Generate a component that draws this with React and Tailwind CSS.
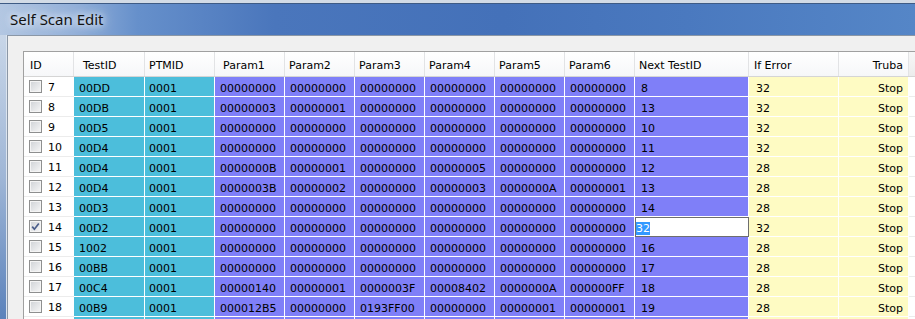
import React from "react";

const CYAN = "bg-[#4cbedb]";
const PURPLE = "bg-[#7f7ff8]";
const YELLOW = "bg-[#fefbc3]";

const Z = "00000000";
const zeros6 = [Z, Z, Z, Z, Z, Z];
const blank6 = ["", "", "", "", "", ""];

const rows = [
  { id: 7, t: "00DD", p: "0001", params: zeros6, next: "8", err: "32" },
  { id: 8, t: "00DB", p: "0001", params: ["00000003", "00000001", Z, Z, Z, Z], next: "13", err: "32" },
  { id: 9, t: "00D5", p: "0001", params: zeros6, next: "10", err: "32" },
  { id: 10, t: "00D4", p: "0001", params: zeros6, next: "11", err: "32" },
  { id: 11, t: "00D4", p: "0001", params: ["0000000B", "00000001", Z, "00000005", Z, Z], next: "12", err: "28" },
  { id: 12, t: "00D4", p: "0001", params: ["0000003B", "00000002", Z, "00000003", "0000000A", "00000001"], next: "13", err: "28" },
  { id: 13, t: "00D3", p: "0001", params: zeros6, next: "14", err: "28" },
  { id: 14, t: "00D2", p: "0001", params: zeros6, next: "32", err: "32", checked: true, editing: true },
  { id: 15, t: "1002", p: "0001", params: zeros6, next: "16", err: "28" },
  { id: 16, t: "00BB", p: "0001", params: zeros6, next: "17", err: "28" },
  { id: 17, t: "00C4", p: "0001", params: ["00000140", "00000001", "0000003F", "00008402", "0000000A", "000000FF"], next: "18", err: "28" },
  { id: 18, t: "00B9", p: "0001", params: ["000012B5", Z, "0193FF00", Z, "00000001", "00000001"], next: "19", err: "28" },
  { id: 19, t: "", p: "", params: blank6, next: "", err: "", stop: "", partial: true },
];

function CheckBox({ checked }) {
  return (
    <span className="relative block w-[13px] h-[13px] shrink-0 border border-[#8e8f8f] bg-gradient-to-br from-[#cfd2d6] to-[#f7f7f7] shadow-[inset_0_0_0_1px_#f4f4f4]">
      {checked && (
        <svg className="absolute left-[0px] top-[0px]" width="11" height="11" viewBox="0 0 11 11">
          <path d="M2.2 5.6 L4.4 8.2 L8.8 2.4" fill="none" stroke="#4a5d8a" strokeWidth="1.7" />
        </svg>
      )}
    </span>
  );
}

function HeadCell({ w, pad, right, children }) {
  return (
    <div
      className={`${w} ${pad} h-[24px] shrink-0 border-r border-[#e2e3e5] pt-[5px] leading-[17px] whitespace-nowrap overflow-hidden ${right ? "text-right" : ""}`}
    >
      {children}
    </div>
  );
}

function Cell({ w, bg, pad, right, children }) {
  return (
    <div
      className={`${w} ${bg} ${pad} h-[20px] shrink-0 border-r border-b border-white pt-[3px] leading-[17px] whitespace-nowrap overflow-hidden ${right ? "text-right" : ""}`}
    >
      {children}
    </div>
  );
}

export default function App() {
  return (
    <div className="w-[915px] h-[319px] overflow-hidden flex flex-col bg-[#f0f0f0] font-['DejaVu_Sans',sans-serif] text-[11px] text-black">
      <div className="h-[3px] shrink-0 bg-[#d2dbe6]" />
      <div className="h-[32px] shrink-0 border-t border-[#3e5b85] bg-[linear-gradient(90deg,#b3c7e2_0%,#93b0d9_8%,#6690cb_15%,#4a76bc_30%,#4471b9_55%,#4a79bf_75%,#5586c7_100%)] pl-[10px] pt-[5px]">
        <span className="font-['Noto_Sans',sans-serif] text-[15px] leading-[20px] text-[#121212] [text-shadow:0_0_6px_#e8eef7,0_0_10px_#dfe7f3,0_0_14px_#d3deef]">
          Self Scan Edit
        </span>
      </div>
      <div className="flex flex-1 min-h-0">
        <div className="w-[7px] shrink-0 bg-gradient-to-b from-[#c8d6e8] via-[#9fb6d6] to-[#5b82bb] border-r border-[#dbe4ef]" />
        <div className="flex-1 min-w-0 border-l border-t border-[#8b97a6] bg-[#f0f0f0] pl-[15px] pt-[15px]">
          <div className="border-l border-t border-[#a0a0a0] bg-white">
            {/* header */}
            <div className="flex h-[25px] border-b border-[#d5d5d5] bg-gradient-to-b from-white to-[#f6f7f9]">
              <HeadCell w="w-[50px]" pad="pl-[6px]">ID</HeadCell>
              <HeadCell w="w-[71px]" pad="pl-[9px]">TestID</HeadCell>
              <HeadCell w="w-[70px]" pad="pl-[4px]">PTMID</HeadCell>
              <HeadCell w="w-[70px]" pad="pl-[8px]">Param1</HeadCell>
              <HeadCell w="w-[70px]" pad="pl-[4px]">Param2</HeadCell>
              <HeadCell w="w-[70px]" pad="pl-[4px]">Param3</HeadCell>
              <HeadCell w="w-[70px]" pad="pl-[4px]">Param4</HeadCell>
              <HeadCell w="w-[70px]" pad="pl-[4px]">Param5</HeadCell>
              <HeadCell w="w-[70px]" pad="pl-[4px]">Param6</HeadCell>
              <HeadCell w="w-[114px]" pad="pl-[4px]">Next TestID</HeadCell>
              <HeadCell w="w-[90px]" pad="pl-[5px]">If Error</HeadCell>
              <HeadCell w="w-[70px]" pad="pr-[5px]" right>Truba</HeadCell>
              <div className="flex-1 h-[24px] bg-gradient-to-b from-[#f7f7f7] to-[#ececec]" />
            </div>
            {/* rows */}
            {rows.map((r) => (
              <div key={r.id} className="flex h-[20px]">
                <div className="w-[50px] h-[20px] shrink-0 border-b border-[#ececec] bg-white pl-[5px] pt-[3px] flex items-start gap-[6px] leading-[17px]">
                  {!r.partial && <CheckBox checked={r.checked} />}
                  {!r.partial && <span className="-mt-[1px]">{r.id}</span>}
                </div>
                <Cell w="w-[71px]" bg={CYAN} pad="pl-[5px]">{r.t}</Cell>
                <Cell w="w-[70px]" bg={CYAN} pad="pl-[4px]">{r.p}</Cell>
                {r.params.map((v, i) => (
                  <Cell key={i} w="w-[70px]" bg={PURPLE} pad="pl-[5px]">{v}</Cell>
                ))}
                {r.editing ? (
                  <div className="w-[114px] h-[20px] shrink-0 bg-white border border-[#6e6e6e] pt-[2px] leading-[17px] whitespace-nowrap overflow-hidden">
                    <span className="bg-[#3399ff] text-white">{r.next}</span>
                  </div>
                ) : (
                  <Cell w="w-[114px]" bg={PURPLE} pad="pl-[6px]">{r.next}</Cell>
                )}
                <Cell w="w-[90px]" bg={YELLOW} pad="pl-[7px]">{r.err}</Cell>
                <Cell w="w-[70px]" bg={YELLOW} pad="pr-[5px]" right>{r.partial ? "" : "Stop"}</Cell>
                <div className="flex-1 h-[20px] border-b border-[#ececec] bg-white" />
              </div>
            ))}
          </div>
        </div>
      </div>
    </div>
  );
}
